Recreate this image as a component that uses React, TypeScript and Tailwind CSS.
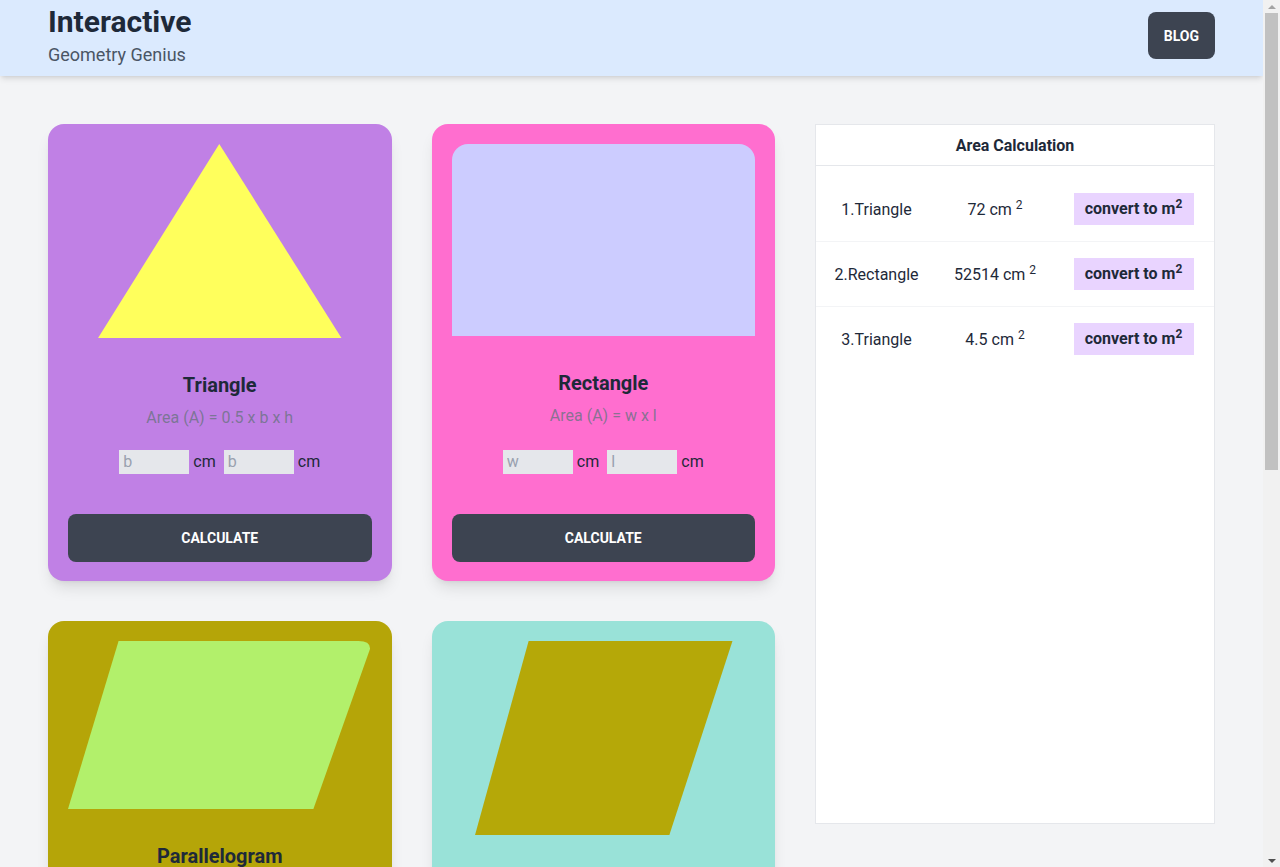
import React from 'react';

type Shape = 'triangle' | 'rectangle' | 'parallelogram' | 'rhombus';

interface ShapeCard {
  name: string;
  shape: Shape;
  bg: string;
  formula: string;
  inputs: [string, string];
}

const cards: ShapeCard[] = [
  { name: 'Triangle', shape: 'triangle', bg: 'bg-[#c080e5]', formula: 'Area (A) = 0.5 x b x h', inputs: ['b', 'b'] },
  { name: 'Rectangle', shape: 'rectangle', bg: 'bg-[#ff6ecf]', formula: 'Area (A) = w x l', inputs: ['w', 'l'] },
  { name: 'Parallelogram', shape: 'parallelogram', bg: 'bg-[#b5a508]', formula: 'Area (A) = b x h', inputs: ['b', 'h'] },
  { name: 'Rhombus', shape: 'rhombus', bg: 'bg-[#99e2d8]', formula: 'Area (A) = 0.5 x p x q', inputs: ['p', 'q'] },
];

const results = [
  { label: '1.Triangle', value: '72' },
  { label: '2.Rectangle', value: '52514' },
  { label: '3.Triangle', value: '4.5' },
];

const ShapeDrawing: React.FC<{ shape: Shape }> = ({ shape }) => {
  if (shape === 'triangle') {
    return (
      <svg width="100%" height="194" viewBox="0 0 303 194" preserveAspectRatio="none" className="block">
        <polygon points="151,0 30,194 273,194" fill="#ffff5c" />
      </svg>
    );
  }
  if (shape === 'rectangle') {
    return <div className="h-[192px] w-full rounded-t-2xl bg-[#ccccff]" />;
  }
  if (shape === 'parallelogram') {
    return (
      <svg width="100%" height="168" viewBox="0 0 303 168" preserveAspectRatio="none" className="block">
        <path d="M50.5 0 H290 Q302 0 301.5 8 L245 168 H0 Z" fill="#b2f06b" />
      </svg>
    );
  }
  return (
    <svg width="100%" height="194" viewBox="0 0 303 194" preserveAspectRatio="none" className="block">
      <polygon points="76.5,0 280,0 217,194 23,194" fill="#b5a808" />
    </svg>
  );
};

const Card: React.FC<{ card: ShapeCard }> = ({ card }) => (
  <div className={`${card.bg} flex flex-col rounded-2xl px-5 pt-5 pb-[19px] shadow-lg`}>
    <ShapeDrawing shape={card.shape} />
    <h2 className="mt-[33px] text-center text-xl leading-7 font-bold text-gray-800">{card.name}</h2>
    <p className="mt-[7px] text-center text-base leading-6 text-gray-500/80">{card.formula}</p>
    <div className="mt-auto pt-5">
      <div className="flex items-center justify-center text-base leading-6 text-gray-800">
        <input
          placeholder={card.inputs[0]}
          className="h-6 w-[70px] bg-gray-200 px-1 outline-none placeholder:text-gray-400"
        />
        <span className="ml-1 mr-2">cm</span>
        <input
          placeholder={card.inputs[1]}
          className="h-6 w-[70px] bg-gray-200 px-1 outline-none placeholder:text-gray-400"
        />
        <span className="ml-1">cm</span>
      </div>
      <button className="mt-10 h-12 w-full rounded-lg bg-[#3d4451] text-sm font-bold text-white uppercase">
        Calculate
      </button>
    </div>
  </div>
);

// the reference was taken with a classic (non-overlay) scrollbar taking 17px
const FakeScrollbar: React.FC = () => (
  <div aria-hidden className="fixed top-0 right-0 flex h-screen w-[17px] flex-col items-center bg-[#f1f1f1]">
    <div className="flex h-[13px] w-full items-center justify-center">
      <div className="h-0 w-0 border-x-[4px] border-b-[4px] border-x-transparent border-b-[#a3a3a3]" />
    </div>
    <div className="h-[457px] w-[13px] bg-[#c1c1c1]" />
    <div className="flex-1" />
    <div className="flex h-[13px] w-full items-center justify-center">
      <div className="h-0 w-0 border-x-[4px] border-t-[4px] border-x-transparent border-t-[#505050]" />
    </div>
  </div>
);

export default function App() {
  return (
    <div className="min-h-screen w-[1263px] bg-gray-100 font-['Roboto',sans-serif] text-gray-800">
      <header className="flex items-start justify-between bg-blue-100 px-12 pt-1 pb-[7px] shadow-md">
        <div>
          <h1 className="text-3xl leading-9 font-bold text-gray-800">Interactive</h1>
          <p className="pt-px text-lg leading-7 text-gray-600">Geometry Genius</p>
        </div>
        <button className="mt-2 h-[47px] rounded-lg bg-[#3d4451] px-4 text-sm font-bold text-white">BLOG</button>
      </header>

      <main className="flex items-start gap-10 px-12 pt-12 pb-12">
        <div className="grid flex-1 grid-cols-2 gap-10">
          {cards.map((card) => (
            <Card key={card.name} card={card} />
          ))}
        </div>

        <aside className="h-[700px] w-[400px] border border-gray-200 bg-white">
          <div className="border-b border-gray-200 pt-[9px] pb-[7px] text-center text-base leading-6 font-bold text-gray-800">
            Area Calculation
          </div>
          <div className="pt-[11px]">
            {results.map((r, i) => (
              <div
                key={r.label}
                className={`grid grid-cols-[121px_116px_1fr] items-center py-4 text-base text-gray-800 ${
                  i < results.length - 1 ? 'border-b border-gray-100' : ''
                }`}
              >
                <span className="pt-0.5 text-center">{r.label}</span>
                <span className="pt-0.5 text-center">
                  {r.value} cm <sup>2</sup>
                </span>
                <span className="flex justify-center">
                  <button className="h-8 w-[120px] bg-purple-200 font-bold text-gray-800">
                    convert to m<sup>2</sup>
                  </button>
                </span>
              </div>
            ))}
          </div>
        </aside>
      </main>
      <FakeScrollbar />
    </div>
  );
}
